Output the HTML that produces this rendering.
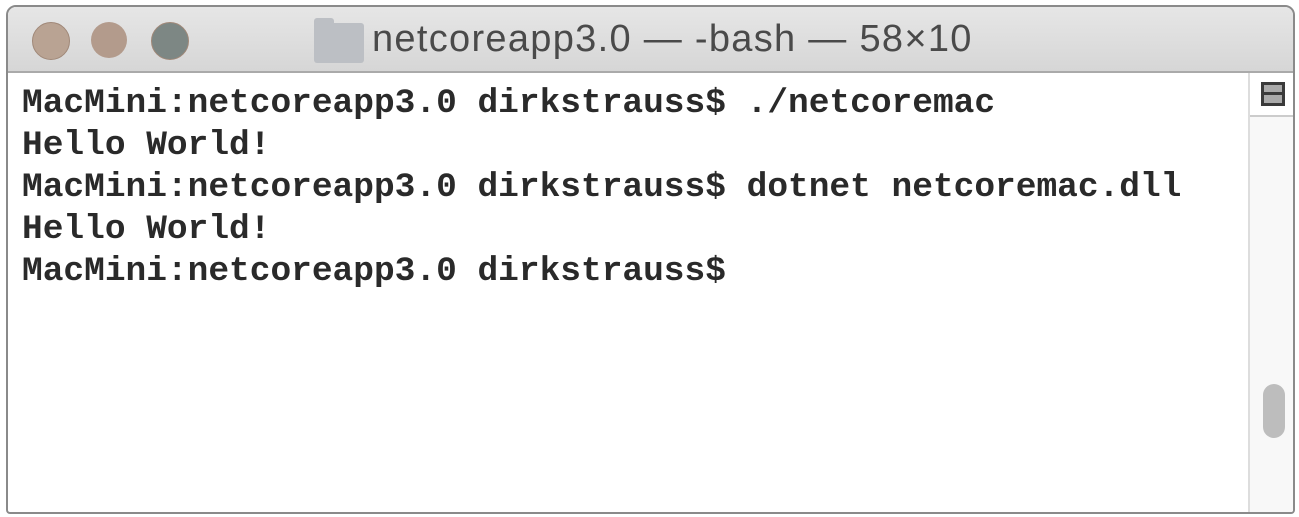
<!DOCTYPE html>
<html><head><style>
body{margin:0;width:1299px;height:517px;background:#fff;overflow:hidden;position:relative;font-family:"Liberation Sans",sans-serif}
.win{position:absolute;left:6px;top:5px;width:1285px;height:505px;border:2px solid #8a8a8a;border-radius:10px 10px 4px 4px;overflow:hidden;background:#fff}
.title{position:absolute;left:0;top:0;right:0;height:64px;background:linear-gradient(#e6e6e6,#d6d6d6);border-bottom:2px solid #aaa}
.c{position:absolute;top:15px;width:36px;height:36px;border-radius:50%}
.t{position:absolute;left:364px;top:11px;font-size:38px;letter-spacing:1.3px;color:#4a4a4a;white-space:nowrap}
.fold{position:absolute;left:306px;top:16px;width:50px;height:40px;background:#bcbfc4;border-radius:3px}
.fold:before{content:"";position:absolute;left:0;top:-5px;width:20px;height:8px;background:#bcbfc4;border-radius:3px 3px 0 0}
pre{position:absolute;left:14px;top:76px;margin:0;font-family:"Liberation Mono",monospace;font-weight:bold;font-size:34.5px;line-height:42px;color:#2a2a2a}
.sb{position:absolute;left:1240px;top:66px;width:45px;bottom:0;border-left:2px solid #ddd;background:#f8f8f8}
.btn{position:absolute;left:0;top:0;width:43px;height:42px;border-bottom:2px solid #ccc;background:#fff}
.btn i{position:absolute;left:11px;top:9px;width:24px;height:24px;border:3px solid #3a3a3a;box-sizing:border-box;background:linear-gradient(#3a3a3a,#3a3a3a) 0 7px/100% 3px no-repeat,#aaa}
.thumb{position:absolute;left:13px;top:311px;width:22px;height:54px;border-radius:11px;background:#bdbdbd}
</style></head><body>
<div class="win">
<div class="title">
<div class="c" style="left:24px;background:#b9a393;border:1px solid #a08878"></div>
<div class="c" style="left:83px;background:#b39b8c"></div>
<div class="c" style="left:143px;background:#7d8784;border:1px solid #a08878"></div>
<div class="fold"></div>
<div class="t">netcoreapp3.0 — -bash — 58×10</div>
</div>
<pre>MacMini:netcoreapp3.0 dirkstrauss$ ./netcoremac
Hello World!
MacMini:netcoreapp3.0 dirkstrauss$ dotnet netcoremac.dll
Hello World!
MacMini:netcoreapp3.0 dirkstrauss$</pre>
<div class="sb"><div class="btn"><i></i></div><div class="thumb"></div></div>
</div>
</body></html>
